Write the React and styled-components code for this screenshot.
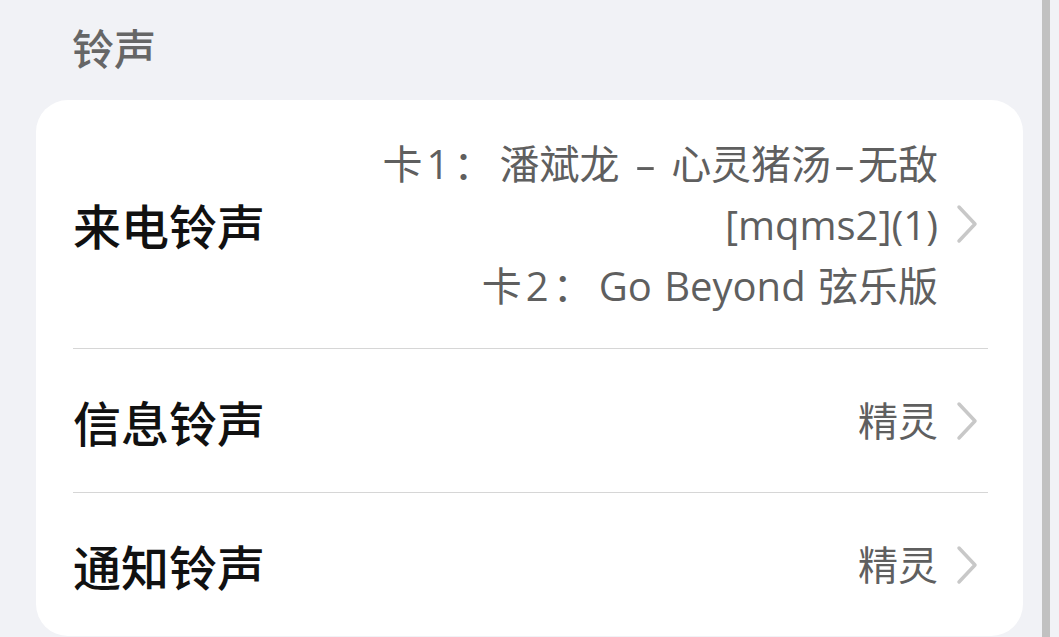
import styled, { createGlobalStyle } from "styled-components"

const GlobalStyle = createGlobalStyle`
  html, body {
    margin: 0;
    padding: 0;
    background: #f1f2f6;
    overflow: hidden;
  }

  body {
    font-family: "Open Sans", "Noto Sans CJK SC", sans-serif;
  }
`

const rows = [
  {
    title: "来电铃声",
    lines: [
      { label: "卡1：", text: "潘斌龙 - 心灵猪汤-无敌" },
      { text: "[mqms2](1)" },
      { label: "卡2：", text: "Go Beyond 弦乐版" },
    ],
    tall: true,
  },
  { title: "信息铃声", lines: [{ text: "精灵" }] },
  { title: "通知铃声", lines: [{ text: "精灵" }] },
]

// the system font draws "-" much wider than Open Sans does
function withDashes(text) {
  return text.split("-").flatMap((part, i) =>
    i === 0 ? [part] : [<Dash key={i}>-</Dash>, part]
  )
}

function Chevron() {
  return (
    <ChevronIcon width="22" height="40" viewBox="0 0 22 40">
      <polyline points="3,3 19,20 3,37" />
    </ChevronIcon>
  )
}

export default function App() {
  return (
    <>
      <GlobalStyle />
      <Page>
        <Main>
          <SectionHeader>铃声</SectionHeader>
          <Card>
            {rows.map((row, i) => (
              <div key={row.title}>
                {i > 0 && <Divider />}
                <Row tall={row.tall}>
                  <Title>{row.title}</Title>
                  <Value>
                    {row.lines.map((line) => (
                      <ValueLine key={line.text}>
                        {line.label && <SimLabel>{line.label}</SimLabel>}
                        {withDashes(line.text)}
                      </ValueLine>
                    ))}
                  </Value>
                  <Chevron />
                </Row>
              </div>
            ))}
          </Card>
        </Main>
        <Scrollbar />
      </Page>
    </>
  )
}

const Page = styled.div`
  display: flex;
  width: 1059px;
  height: 637px;
  overflow: hidden;
`

const Main = styled.div`
  width: 1042px;
  padding: 0 19px 0 36px;
  box-sizing: border-box;
  display: flex;
  flex-direction: column;
`

const SectionHeader = styled.div`
  height: 100px;
  padding: 22px 0 0 36px;
  box-sizing: border-box;
  font-family: "Noto Sans CJK SC", sans-serif;
  font-size: 42px;
  line-height: 50px;
  font-weight: 500;
  color: #666666;
`

const Card = styled.div`
  background: #ffffff;
  border-radius: 32px;
  overflow: hidden;
`

const Row = styled.div`
  display: flex;
  align-items: center;
  height: ${({ tall }) => (tall ? "248px" : "143px")};
  padding: 0 45px 0 37px;
  box-sizing: border-box;
`

const Divider = styled.div`
  height: 1px;
  margin: 0 35px 0 37px;
  background: #d6d6d6;
`

const Title = styled.div`
  flex: 1;
  font-family: "Noto Sans CJK SC", sans-serif;
  font-size: 48px;
  line-height: 56px;
  font-weight: 500;
  color: #111111;
`

const Value = styled.div`
  display: flex;
  flex-direction: column;
  align-items: flex-end;
  margin-right: 18px;
`

const ValueLine = styled.div`
  font-size: 40px;
  line-height: 61px;
  word-spacing: 2px;
  color: #5f5f5f;
  white-space: nowrap;
`

const SimLabel = styled.span`
  letter-spacing: 4px;
  margin-right: 2px;
`

const Dash = styled.span`
  display: inline-block;
  margin: 0 7px;
  transform: scaleX(1.7);
`

const ChevronIcon = styled.svg`
  flex-shrink: 0;

  polyline {
    fill: none;
    stroke: #c8c8c8;
    stroke-width: 3.5;
    stroke-linecap: round;
    stroke-linejoin: round;
  }
`

const Scrollbar = styled.div`
  width: 8px;
  height: 100%;
  background: #c1c1c1;
`
